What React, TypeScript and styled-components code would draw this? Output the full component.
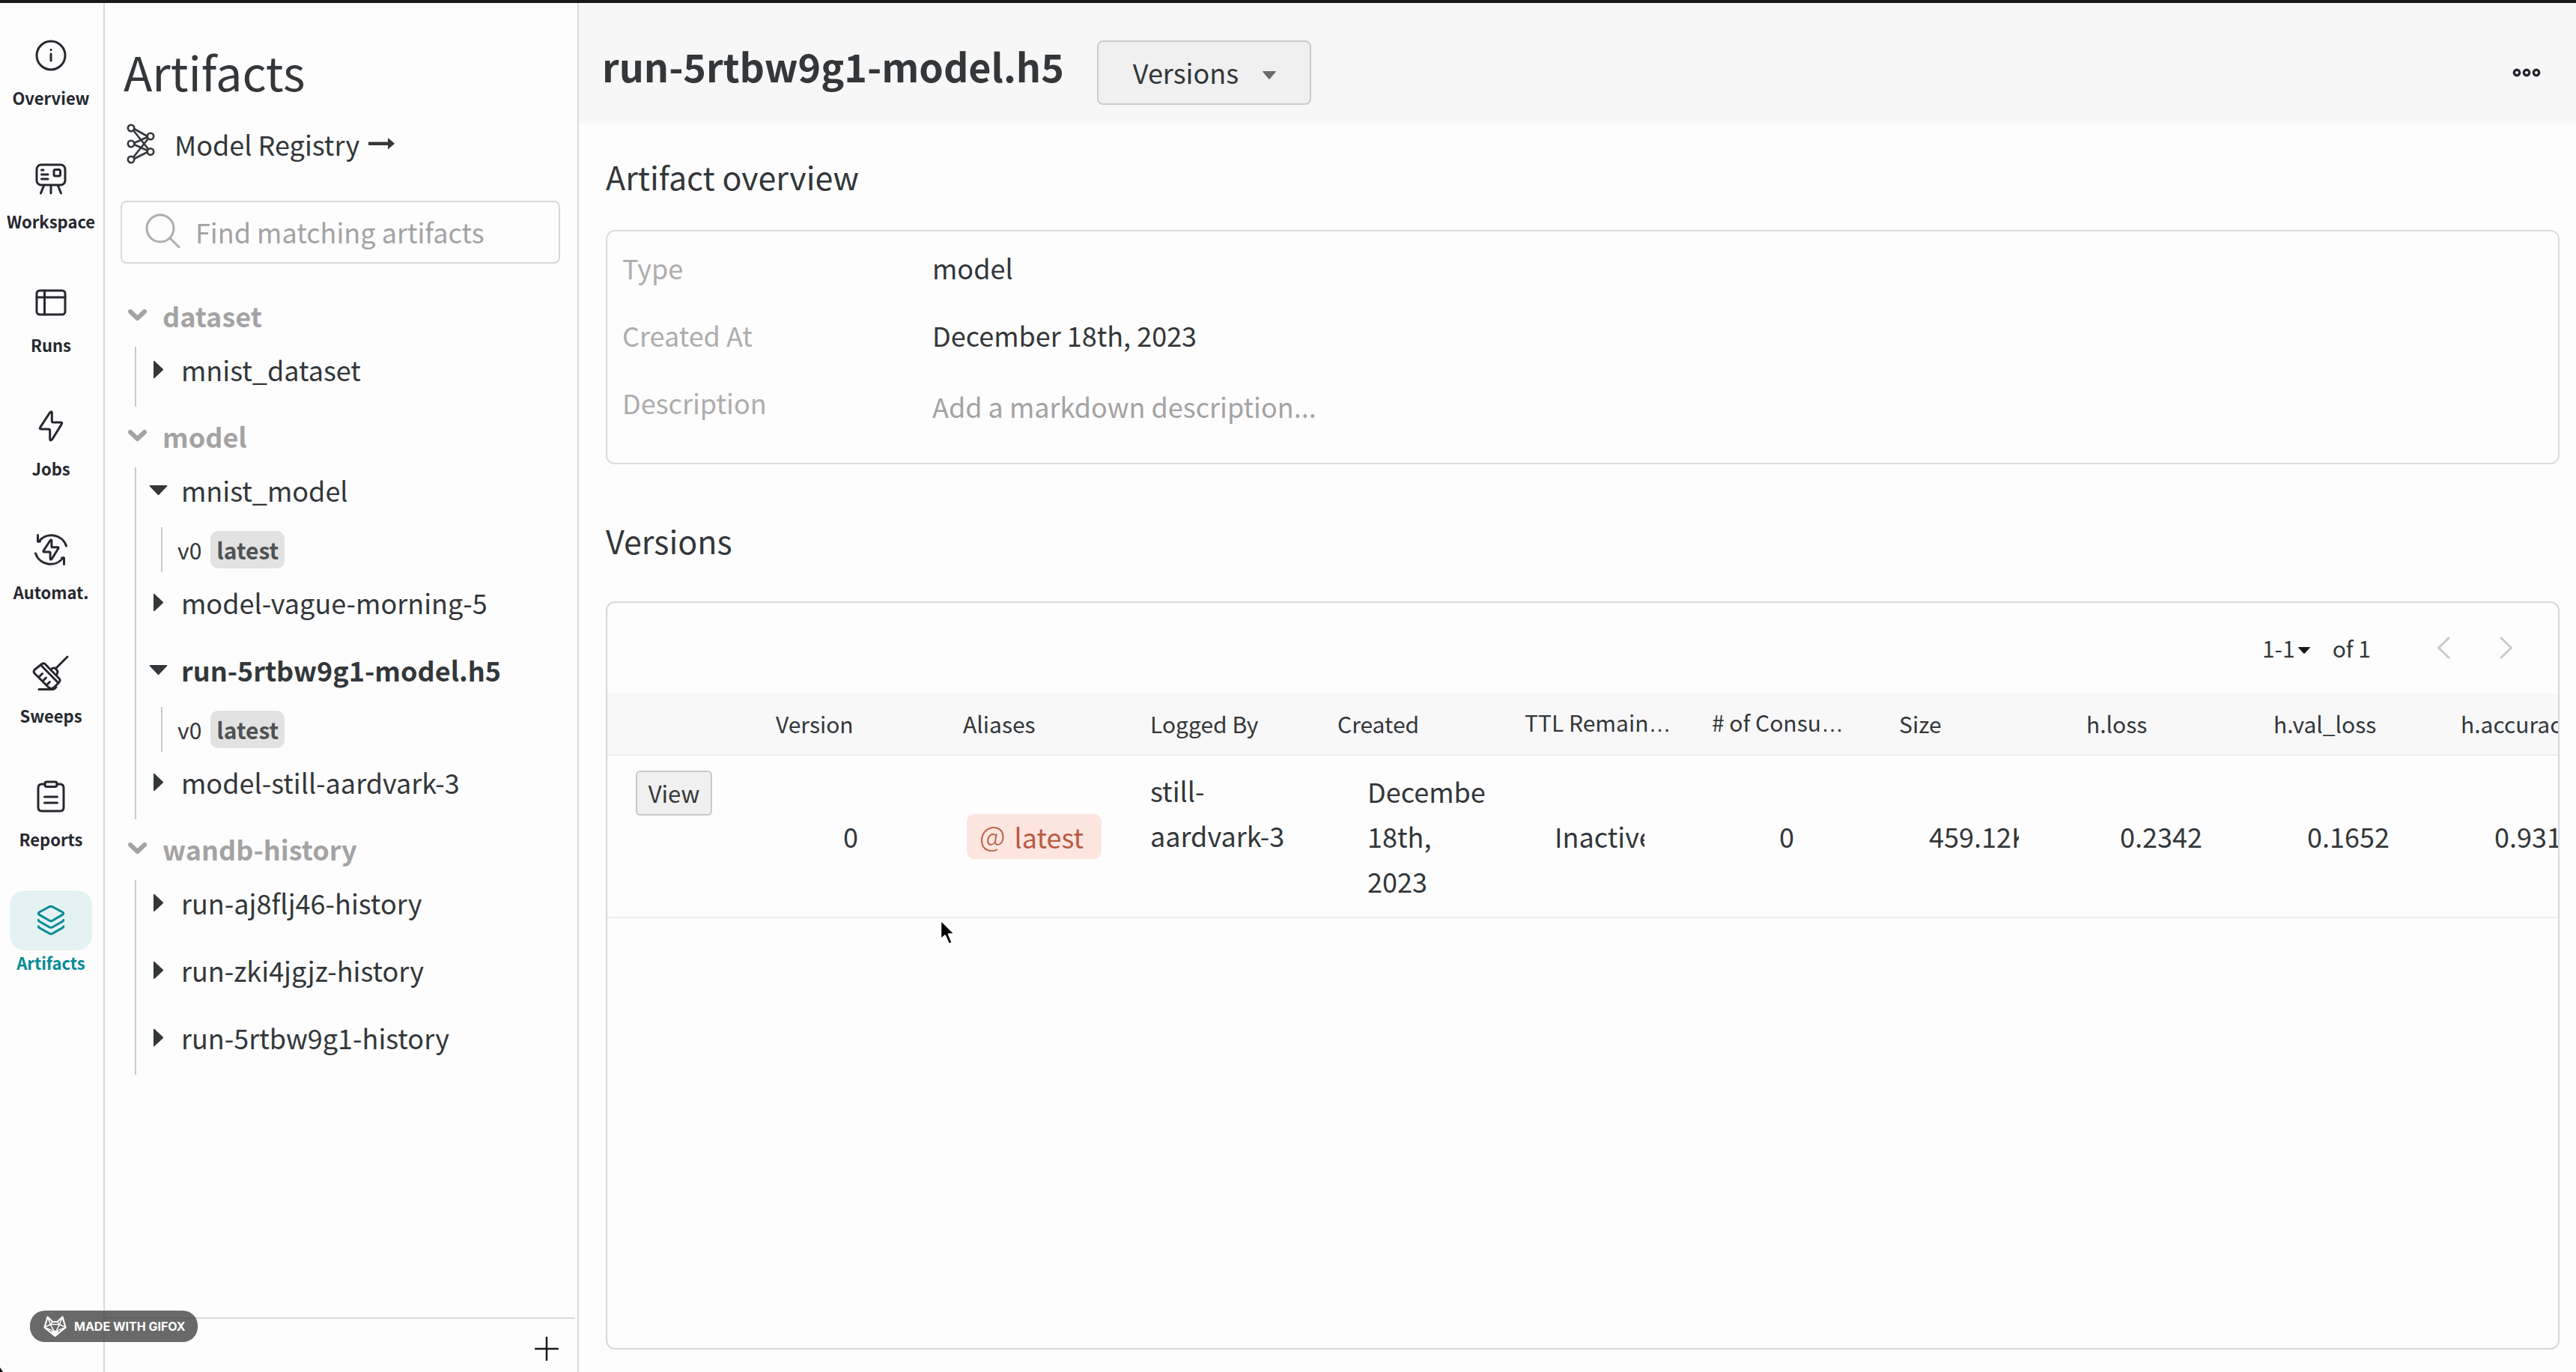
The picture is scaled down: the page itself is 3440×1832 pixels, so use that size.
import React from "react";
import styled, { createGlobalStyle, css } from "styled-components";

const ink = "#33373a";
const railInk = "#26282f";
const muted = "#a3a3a3";
const line = "#d9d9db";

const GlobalStyle = createGlobalStyle`
  *, *::before, *::after { box-sizing: border-box; }
  html, body, #root { height: 100%; }
  body {
    margin: 0;
    overflow: hidden;
    background: #fdfdfd;
    color: ${ink};
    font-family: "Noto Sans CJK SC", "Noto Sans", sans-serif;
    font-size: 36px;
    line-height: 60px;
  }
  button, input { font: inherit; color: inherit; }
  h1, h2, p, ul, dl, dd { margin: 0; padding: 0; }
  ul { list-style: none; }
  svg { display: block; flex: none; }
`;

const Page = styled.div`
  display: flex;
  height: 100vh;
  border-top: 4px solid #18181d;
`;

/* ---------- icon rail ---------- */

const Rail = styled.nav`
  flex: none;
  display: flex;
  flex-direction: column;
  align-items: center;
  gap: 53px;
  width: 140px;
  padding-top: 30px;
  padding-right: 2px;
  border-right: 2px solid ${line};
`;

const RailItem = styled.a<{ $active?: boolean }>`
  display: flex;
  flex-direction: column;
  align-items: center;
  width: 110px;
  color: ${(p) => (p.$active ? "#038a96" : railInk)};
  font-size: 22px;
  line-height: 32px;
  font-weight: 700;
  white-space: nowrap;
  text-decoration: none;
`;

const RailIcon = styled.span<{ $active?: boolean }>`
  display: grid;
  place-items: center;
  width: 110px;
  height: 80px;
  border-radius: 20px;
  background: ${(p) => (p.$active ? "#e4f2f4" : "transparent")};
`;

/* ---------- sidebar ---------- */

const Sidebar = styled.aside`
  flex: none;
  display: flex;
  flex-direction: column;
  width: 633px;
  border-right: 2px solid ${line};
`;

const SidebarBody = styled.div`
  flex: 1;
  padding: 46px 23px 0 21px;
`;

const SidebarTitle = styled.h1`
  padding-left: 4px;
  font-size: 63px;
  line-height: 90px;
  font-weight: 400;
`;

const RegistryLink = styled.a`
  display: flex;
  align-items: center;
  gap: 12px;
  height: 60px;
  margin-top: 22px;
  padding-left: 8px;
  color: inherit;
  text-decoration: none;
`;

const RegistryName = styled.span`
  padding-left: 14px;
`;

const SearchBox = styled.label`
  display: flex;
  align-items: center;
  gap: 20px;
  height: 84px;
  margin-top: 46px;
  padding: 0 30px 2px;
  border: 2px solid ${line};
  border-radius: 8px;
`;

const SearchInput = styled.input`
  flex: 1;
  min-width: 0;
  height: 60px;
  padding: 0;
  border: 0;
  outline: 0;
  background: transparent;
  &::placeholder { color: ${muted}; opacity: 1; }
`;

const Tree = styled.div`
  padding-top: 30px;
`;

const GroupHeader = styled.button`
  display: flex;
  align-items: center;
  gap: 20px;
  width: 100%;
  height: 81px;
  padding: 0 0 4px 9px;
  border: 0;
  background: none;
  color: ${muted};
  font-weight: 700;
  text-align: left;
`;

const Group = styled.ul`
  display: flex;
  flex-direction: column;
  gap: 10px;
  margin-left: 19px;
  padding-left: 17px;
  border-left: 2px solid #c9c9cb;
`;

const ArtifactRow = styled.button<{ $bold?: boolean }>`
  display: flex;
  align-items: center;
  gap: 18px;
  width: 100%;
  height: 80px;
  padding: 0 0 20px;
  border: 0;
  background: none;
  font-weight: ${(p) => (p.$bold ? 700 : 400)};
  line-height: 60px;
  text-align: left;
  white-space: nowrap;
`;

const VersionRow = styled.div`
  display: flex;
  align-items: center;
  gap: 12px;
  height: 60px;
  margin-left: 16px;
  padding-left: 20px;
  border-left: 2px solid #c9c9cb;
  font-size: 30px;
`;

const VersionTag = styled.span`
  height: 50px;
  padding: 0 8px;
  border-radius: 10px;
  background: #e2e2e2;
  color: #505254;
  font-weight: 700;
  line-height: 50px;
`;

const SidebarFooter = styled.footer`
  display: flex;
  justify-content: flex-end;
  align-items: center;
  height: 73px;
  margin-right: 3px;
  padding: 8px 22px 0 0;
  border-top: 2px solid ${line};
`;

const IconButton = styled.button`
  display: grid;
  place-items: center;
  padding: 0;
  border: 0;
  background: none;
`;

/* ---------- main ---------- */

const Main = styled.main`
  flex: 1;
  min-width: 0;
  display: flex;
  flex-direction: column;
`;

const Header = styled.header`
  flex: none;
  display: flex;
  align-items: center;
  gap: 44px;
  height: 161px;
  padding: 25px 46px 0 31px;
  background: #f7f7f7;
`;

const Title = styled.h1`
  font-size: 52px;
  line-height: 80px;
  font-weight: 700;
  padding-bottom: 18px;
`;

const VersionsButton = styled.button`
  display: flex;
  align-items: center;
  justify-content: space-between;
  width: 286px;
  height: 86px;
  padding: 0 45px 2px 46px;
  border: 2px solid #cbcbcb;
  border-radius: 8px;
  background: #f0f0f0;
`;

const MoreButton = styled(IconButton)`
  margin-left: auto;
`;

const Content = styled.div`
  flex: 1;
  min-height: 0;
  display: flex;
  flex-direction: column;
  padding: 40px 22px 30px 36px;
`;

const SectionTitle = styled.h2`
  flex: none;
  font-size: 43px;
  line-height: 60px;
  font-weight: 400;
`;

const Overview = styled.dl`
  flex: none;
  display: grid;
  grid-template-columns: 414px 1fr;
  row-gap: 30px;
  margin: 42px 0 71px;
  padding: 18px 20px 46px;
  border: 2px solid #dcdcdd;
  border-radius: 12px;
`;

const Term = styled.dt`
  color: #adadad;
`;

const Placeholder = styled.dd`
  padding-top: 5px;
  color: ${muted};
`;

const Card = styled.section`
  flex: 1;
  min-height: 0;
  overflow: hidden;
  margin-top: 52px;
  border: 2px solid #d7d8de;
  border-radius: 12px;
`;

const Pager = styled.div`
  display: flex;
  align-items: center;
  justify-content: flex-end;
  height: 121px;
  padding: 0 60px 2px 0;
  font-size: 30px;
`;

const RangeButton = styled.button`
  display: flex;
  align-items: center;
  gap: 4px;
  margin-right: 30px;
  padding: 0;
  border: 0;
  background: none;
`;

const PagerArrows = styled.div`
  display: flex;
  gap: 66px;
  margin-left: 88px;
`;

const Table = styled.table`
  table-layout: fixed;
  width: 2700px;
  border-collapse: collapse;
`;

const HeadCell = styled.th<{ $narrow?: boolean }>`
  width: ${(p) => (p.$narrow ? 200 : 250)}px;
  height: 82px;
  padding: 0 25px 2px;
  overflow: hidden;
  border-bottom: 2px solid #eeeeee;
  background: #f8f8f8;
  font-size: 30px;
  font-weight: 400;
  text-align: left;
  white-space: nowrap;
`;

const Ellipsis = styled.span`
  font-family: "Liberation Sans", sans-serif;
`;

const Cell = styled.td<{ $top?: boolean; $action?: boolean }>`
  height: 217px;
  padding: ${(p) => (p.$action ? "20px 38px" : "16px 25px 18px")};
  border-bottom: 2px solid #eeeeee;
  vertical-align: ${(p) => (p.$top || p.$action ? "top" : "middle")};
`;

const CellValue = styled.div<{ $kind?: "number" | "date" }>`
  overflow: hidden;
  ${(p) =>
    p.$kind === "number" &&
    css`
      margin: 0 40px;
      text-align: center;
      white-space: nowrap;
    `}
  ${(p) =>
    p.$kind === "date" &&
    css`
      margin-left: 40px;
    `}
`;

const ViewButton = styled.button`
  display: block;
  width: 102px;
  height: 60px;
  padding: 0;
  border: 2px solid #c6c8ca;
  border-radius: 6px;
  background: #f0f0f0;
  font-size: 31px;
  line-height: 54px;
`;

const AliasTag = styled.span`
  display: inline-flex;
  align-items: center;
  gap: 12px;
  height: 60px;
  margin-left: 5px;
  padding: 0 24px 0 17px;
  border-radius: 10px;
  background: #fce6df;
  color: #bb5a43;
`;

const AtSign = styled.span`
  font-size: 38px;
  font-weight: 300;
  line-height: 56px;
  padding-bottom: 4px;
`;

/* ---------- overlays ---------- */

const Badge = styled.div`
  position: absolute;
  left: 40px;
  bottom: 40px;
  display: flex;
  align-items: center;
  gap: 10px;
  height: 42px;
  padding: 0 16px 0 18px;
  border-radius: 20px;
  background: rgba(72, 72, 72, 0.82);
  color: #fff;
  font-family: Inter, "Noto Sans", sans-serif;
  font-size: 16px;
  font-weight: 700;
  line-height: 42px;
  white-space: nowrap;
`;

const Pointer = styled.svg`
  position: absolute;
  left: 1252px;
  top: 1224px;
`;

const Corner = styled.svg`
  position: absolute;
  left: 0;
  bottom: 0;
`;

/* ---------- icons ---------- */

const stroke = {
  fill: "none",
  stroke: "currentColor",
  strokeWidth: 3,
  strokeLinecap: "round",
  strokeLinejoin: "round",
} as const;

const InfoIcon = () => (
  <svg width="50" height="50" viewBox="0 0 50 50" {...stroke}>
    <circle cx="25" cy="25" r="19" />
    <path d="M25 23v9" />
    <path d="M25 17.5v.2" />
  </svg>
);

const WorkspaceIcon = () => (
  <svg width="50" height="50" viewBox="0 0 50 50" {...stroke}>
    <rect x="6" y="6" width="38" height="27" rx="6" />
    <path d="M12.500 13h2.500M12.500 19h8.500M12.500 25h8.500" />
    <rect x="29" y="12.500" width="8.500" height="8.500" rx="2" />
    <path d="M15.500 34l-4 10M25 34v10M34.500 34l4 10" />
  </svg>
);

const RunsIcon = () => (
  <svg width="50" height="50" viewBox="0 0 50 50" {...stroke}>
    <rect x="6" y="9" width="38" height="32" rx="4" />
    <path d="M6 18h38M16.500 9v32" />
  </svg>
);

const boltPath =
  "M26.300 7.200V18q0 2 2 2h9.500q3.200 0 1.300 2.600L27 42.300q-3 3.500-3.300-.5V31q0-2-2-2h-9.500q-3.200 0-1.300-2.600L23 7.700q3-3.500 3.300-.5Z";

const JobsIcon = () => (
  <svg width="50" height="50" viewBox="0 0 50 50" {...stroke}>
    <path d={boltPath} />
  </svg>
);

const AutomationIcon = () => (
  <svg width="50" height="50" viewBox="0 0 50 50" {...stroke}>
    <path
      d={boltPath}
      transform="translate(25 25) scale(.69) translate(-25 -24.700)"
      strokeWidth="4.300"
    />
    <path d="M8.500 14.500A21 21 0 0 1 45.500 20M7.500 5.500V14h3" />
    <path d="M41.500 35.500A21 21 0 0 1 4.500 30M42.500 44.500V36h-3" />
  </svg>
);

const SweepsIcon = () => (
  <svg width="50" height="50" viewBox="0 0 50 50" {...stroke}>
    <path d="M47 3L31 19" />
    <path d="M17 12.500q-2-1.500-4 0L3.500 20q-2.500 2.500-.5 5L22 44q3.500 3 7 0l6.500-6.500q3-3 .5-5.500Z" />
    <path d="M12 14.500L34 37" />
    <path d="M25 20q3.500-4 7-.5t.5 7.500" />
    <path d="M10 29l3.500-3.500M15 34.500l3.500-3.500M20 40l3.500-3.500" />
    <path d="M9 46.500h18q3 0 5-3" />
  </svg>
);

const ReportsIcon = () => (
  <svg width="50" height="50" viewBox="0 0 50 50" {...stroke}>
    <path d="M17 8h-4q-5 0-5 5v26q0 5 5 5h24q5 0 5-5V13q0-5-5-5h-4" />
    <rect x="17" y="5" width="16" height="6.500" rx="2.500" />
    <path d="M16.500 25h17M16.500 33h17" />
  </svg>
);

const LayersIcon = () => (
  <svg width="50" height="50" viewBox="0 0 50 50" {...stroke}>
    <path d="M23 6.700L9.500 14q-2.500 1.700 0 3.400L23 25.300q2 1 4 0l13.500-7.900q2.500-1.700 0-3.400L27 6.700q-2-1-4 0Z" />
    <path d="M8.300 24.500q0 1.200 1.500 2L23 34q2 1 4 0l13.200-7.500q1.500-.8 1.500-2" />
    <path d="M8.300 33q0 1.200 1.500 2L23 42.500q2 1 4 0L40.200 35q1.500-.8 1.500-2" />
  </svg>
);

const RegistryIcon = () => (
  <svg width="38" height="54" viewBox="0 0 38 54" {...stroke} strokeWidth={2.6}>
    <path d="M10 7l18 10M9 9l20 25M10 26l18-8M10 28l18 8M9 45l20-25M10 47l18-9" />
    <g fill="#fdfdfd">
      <circle cx="6" cy="6" r="4.200" />
      <circle cx="6" cy="27" r="4.200" />
      <circle cx="6" cy="48" r="4.200" />
      <circle cx="32" cy="17" r="4.200" />
      <circle cx="32" cy="37.500" r="4.200" />
    </g>
  </svg>
);

const LongArrow = () => (
  <svg width="35" height="16" viewBox="0 0 35 16" fill="currentColor">
    <path d="M0 5.500h26V0l9 7.800-9 7.800v-5.500H0Z" />
  </svg>
);

const SearchIcon = () => (
  <svg width="48" height="48" viewBox="0 0 48 48" {...stroke} stroke="#adadad">
    <circle cx="21" cy="20" r="18" />
    <path d="M34 33l12 12" />
  </svg>
);

const GroupChevron = () => (
  <svg width="27" height="18" viewBox="0 0 27 18" {...stroke} strokeWidth={6}>
    <path d="M4 4l9.500 9L23 4" />
  </svg>
);

const Triangle = ({ open }: { open?: boolean }) => (
  <svg width="25" height="25" viewBox="0 0 25 25" fill="currentColor">
    <path
      d={
        open
          ? "M1.500 6h22q1.500 0 .5 1.500L13.500 18.500q-1 1-2 0L1 7.500Q0 6 1.500 6Z"
          : "M6 2q0-2 1.500-.8L18.500 11.500q1 1 0 2L7.500 23.800Q6 25 6 23Z"
      }
    />
  </svg>
);

const CaretShape = styled.svg`
  margin-top: 8px;
`;

const Caret = ({ width, height, color }: { width: number; height: number; color: string }) => (
  <CaretShape width={width} height={height} viewBox="0 0 20 11" preserveAspectRatio="none" fill={color}>
    <path d="M1 0h18q1.500 0 .5 1.200L11 10.300q-1 1-2 0L.5 1.200Q-.5 0 1 0Z" />
  </CaretShape>
);

const PageChevron = ({ back }: { back?: boolean }) => (
  <svg width="18" height="30" viewBox="0 0 18 30" {...stroke} stroke="#c9c9cb">
    <path d={back ? "M16 2L2.500 15 16 28" : "M2 2l13.500 13L2 28"} />
  </svg>
);

const PlusIcon = () => (
  <svg width="32" height="32" viewBox="0 0 32 32" {...stroke} stroke="#17181a" strokeWidth={2.5}>
    <path d="M16 1v30M1 16h30" />
  </svg>
);

const DotsIcon = () => (
  <svg width="40" height="14" viewBox="0 0 40 14" fill="none" stroke={railInk} strokeWidth="3.400">
    <circle cx="7" cy="7" r="3.700" />
    <circle cx="20" cy="7" r="3.700" />
    <circle cx="33" cy="7" r="3.700" />
  </svg>
);

const FoxIcon = () => (
  <svg width="31" height="28" viewBox="0 0 31 28" fill="none" stroke="#fff" strokeWidth="1.500" strokeLinejoin="round">
    <path d="M5.500 1.500l7 6.500h6l7-6.500 4 14L15.500 27 1.500 15.500Z" strokeWidth="2.200" />
    <path d="M5.500 1.500l4 10-8 4M25.500 1.500l-4 10 8 4M9.500 11.500l3-3.500M21.500 11.500l-3-3.500M9.500 11.500l6 12 6-12M9.500 11.500h12M1.500 15.500l10 4M29.500 15.500l-10 4" />
    <path d="M11.500 20.500h8L15.500 26.500Z" fill="#fff" />
  </svg>
);

/* ---------- data ---------- */

const railItems = [
  { name: "Overview", Icon: InfoIcon },
  { name: "Workspace", Icon: WorkspaceIcon },
  { name: "Runs", Icon: RunsIcon },
  { name: "Jobs", Icon: JobsIcon },
  { name: "Automat.", Icon: AutomationIcon },
  { name: "Sweeps", Icon: SweepsIcon },
  { name: "Reports", Icon: ReportsIcon },
  { name: "Artifacts", Icon: LayersIcon, active: true },
];

type Artifact = { name: string; selected?: boolean; version?: string };

const groups: { name: string; artifacts: Artifact[] }[] = [
  { name: "dataset", artifacts: [{ name: "mnist_dataset" }] },
  {
    name: "model",
    artifacts: [
      { name: "mnist_model", version: "v0" },
      { name: "model-vague-morning-5" },
      { name: "run-5rtbw9g1-model.h5", version: "v0", selected: true },
      { name: "model-still-aardvark-3" },
    ],
  },
  {
    name: "wandb-history",
    artifacts: [
      { name: "run-aj8flj46-history" },
      { name: "run-zki4jgjz-history" },
      { name: "run-5rtbw9g1-history" },
    ],
  },
];

const columns: { label: string; shortened?: boolean }[] = [
  { label: "Version" },
  { label: "Aliases" },
  { label: "Logged By" },
  { label: "Created" },
  { label: "TTL Remain", shortened: true },
  { label: "# of Consu", shortened: true },
  { label: "Size" },
  { label: "h.loss" },
  { label: "h.val_loss" },
  { label: "h.accuracy" },
];

export default function App() {
  return (
    <>
      <GlobalStyle />
      <Page>
        <Rail>
          {railItems.map(({ name, Icon, active }) => (
            <RailItem key={name} href="#" $active={active}>
              <RailIcon $active={active}>
                <Icon />
              </RailIcon>
              {name}
            </RailItem>
          ))}
        </Rail>

        <Sidebar>
          <SidebarBody>
            <SidebarTitle>Artifacts</SidebarTitle>
            <RegistryLink href="#">
              <RegistryIcon />
              <RegistryName>Model Registry</RegistryName>
              <LongArrow />
            </RegistryLink>
            <SearchBox>
              <SearchIcon />
              <SearchInput type="text" aria-label="Find matching artifacts" placeholder="Find matching artifacts" />
            </SearchBox>
            <Tree>
              {groups.map((group) => (
                <section key={group.name}>
                  <GroupHeader>
                    <GroupChevron />
                    {group.name}
                  </GroupHeader>
                  <Group>
                    {group.artifacts.map((a) => (
                      <li key={a.name}>
                        <ArtifactRow $bold={a.selected}>
                          <Triangle open={!!a.version} />
                          {a.name}
                        </ArtifactRow>
                        {a.version && (
                          <VersionRow>
                            {a.version}
                            <VersionTag>latest</VersionTag>
                          </VersionRow>
                        )}
                      </li>
                    ))}
                  </Group>
                </section>
              ))}
            </Tree>
          </SidebarBody>
          <SidebarFooter>
            <IconButton aria-label="Create artifact">
              <PlusIcon />
            </IconButton>
          </SidebarFooter>
        </Sidebar>

        <Main>
          <Header>
            <Title>run-5rtbw9g1-model.h5</Title>
            <VersionsButton>
              Versions
              <Caret width={18} height={11} color="#6a6c6e" />
            </VersionsButton>
            <MoreButton aria-label="More actions">
              <DotsIcon />
            </MoreButton>
          </Header>

          <Content>
            <SectionTitle>Artifact overview</SectionTitle>
            <Overview>
              <Term>Type</Term>
              <dd>model</dd>
              <Term>Created At</Term>
              <dd>December 18th, 2023</dd>
              <Term>Description</Term>
              <Placeholder>Add a markdown description...</Placeholder>
            </Overview>

            <SectionTitle>Versions</SectionTitle>
            <Card>
              <Pager>
                <RangeButton>
                  1-1
                  <Caret width={16} height={9} color="#17181a" />
                </RangeButton>
                of 1
                <PagerArrows>
                  <IconButton aria-label="Previous page">
                    <PageChevron back />
                  </IconButton>
                  <IconButton aria-label="Next page">
                    <PageChevron />
                  </IconButton>
                </PagerArrows>
              </Pager>
              <Table>
                <thead>
                  <tr>
                    <HeadCell $narrow aria-label="Actions" />
                    {columns.map((c) => (
                      <HeadCell key={c.label}>
                        {c.label}
                        {c.shortened && <Ellipsis>…</Ellipsis>}
                      </HeadCell>
                    ))}
                  </tr>
                </thead>
                <tbody>
                  <tr>
                    <Cell $action>
                      <ViewButton>View</ViewButton>
                    </Cell>
                    <Cell>
                      <CellValue $kind="number">0</CellValue>
                    </Cell>
                    <Cell>
                      <AliasTag>
                        <AtSign>@</AtSign>
                        <span>latest</span>
                      </AliasTag>
                    </Cell>
                    <Cell $top>
                      <CellValue>still-aardvark-3</CellValue>
                    </Cell>
                    <Cell>
                      <CellValue $kind="date">December 18th, 2023</CellValue>
                    </Cell>
                    <Cell>
                      <CellValue $kind="number">Inactive</CellValue>
                    </Cell>
                    <Cell>
                      <CellValue $kind="number">0</CellValue>
                    </Cell>
                    <Cell>
                      <CellValue $kind="number">459.12KB</CellValue>
                    </Cell>
                    <Cell>
                      <CellValue $kind="number">0.2342</CellValue>
                    </Cell>
                    <Cell>
                      <CellValue $kind="number">0.1652</CellValue>
                    </Cell>
                    <Cell>
                      <CellValue $kind="number">0.9315</CellValue>
                    </Cell>
                  </tr>
                </tbody>
              </Table>
            </Card>
          </Content>
        </Main>
      </Page>

      <Badge>
        <FoxIcon />
        MADE WITH GIFOX
      </Badge>
      <Pointer width="30" height="44" viewBox="0 0 30 44">
        <path
          d="M4 4v27l6-5.500 5 11.500 5-2-5-11.500h8.500Z"
          fill="#000"
          stroke="#fff"
          strokeWidth="2.500"
          strokeLinejoin="round"
        />
      </Pointer>
      <Corner width="4" height="6" viewBox="0 0 4 6">
        <path d="M0 0l4 6H0Z" fill="#000" />
      </Corner>
    </>
  );
}
